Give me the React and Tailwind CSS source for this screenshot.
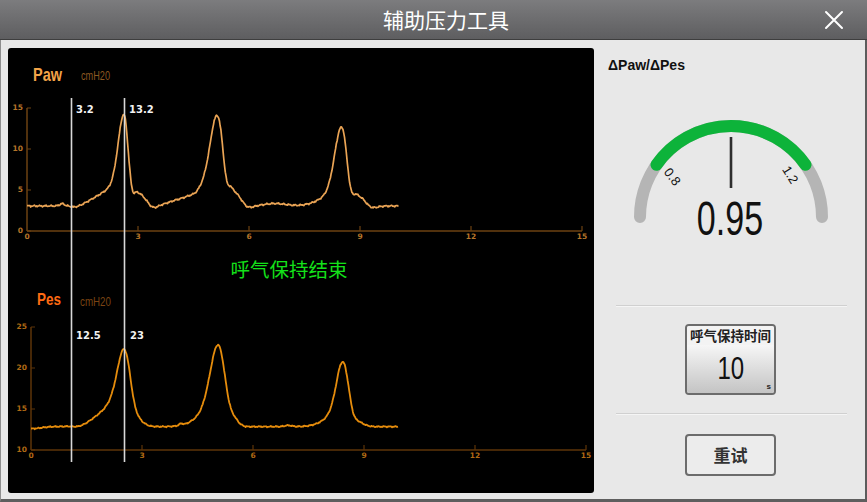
import React from "react";

// asymmetric gaussian bump
const g = (t, c, h, wl, wr) => {
  const w = t < c ? wl : wr;
  return h * Math.exp(-((t - c) ** 2) / (2 * w * w));
};

const noise = (t) =>
  0.06 * Math.sin(t * 41) + 0.04 * Math.sin(t * 97 + 1.3) + 0.03 * Math.sin(t * 173);

const pawValue = (t) =>
  3.05 + noise(t) +
  g(t, 0.95, 0.25, 0.06, 0.06) - g(t, 1.3, 0.3, 0.12, 0.2) +
  g(t, 2.55, 2.5, 0.55, 0.15) + g(t, 2.63, 8.9, 0.16, 0.11) + g(t, 2.98, 1.6, 0.08, 0.2) -
  g(t, 3.4, 0.35, 0.1, 0.12) + g(t, 4.0, 0.35, 0.25, 0.25) - g(t, 4.55, 0.2, 0.1, 0.1) +
  g(t, 5.0, 2.6, 0.5, 0.18) + g(t, 5.17, 9.2, 0.2, 0.14) + g(t, 5.52, 1.9, 0.07, 0.22) -
  g(t, 5.95, 0.35, 0.1, 0.15) + g(t, 6.7, 0.3, 0.3, 0.3) +
  g(t, 8.35, 1.5, 0.4, 0.18) + g(t, 8.52, 8.6, 0.19, 0.13) + g(t, 8.9, 1.3, 0.08, 0.2) -
  g(t, 9.3, 0.3, 0.1, 0.15);

const pesValue = (t) =>
  12.85 + noise(t) * 0.7 - g(t, 0, 0.25, 0.2, 0.25) - g(t, 1.3, 0.2, 0.15, 0.2) +
  g(t, 2.4, 3.0, 0.5, 0.2) + g(t, 2.55, 7.0, 0.2, 0.16) + g(t, 2.92, 0.6, 0.1, 0.15) +
  g(t, 4.05, 0.2, 0.05, 0.05) +
  g(t, 4.95, 2.2, 0.4, 0.2) + g(t, 5.08, 8.1, 0.22, 0.18) + g(t, 5.5, 0.7, 0.1, 0.12) +
  g(t, 6.95, 0.15, 0.1, 0.1) +
  g(t, 8.3, 1.5, 0.35, 0.15) + g(t, 8.45, 6.9, 0.18, 0.15) + g(t, 8.85, 0.5, 0.08, 0.15);

const trace = (fn, tEnd, x0, y0, yMin) => {
  const pts = [];
  for (let t = 0; t <= tEnd; t += 0.02) {
    const x = x0 + 37 * t;
    const y = y0 - (fn(t) - yMin) * 8.2;
    pts.push(`${x.toFixed(1)} ${y.toFixed(1)}`);
  }
  return "M" + pts.join(" L");
};

const Axis = ({ x0, y0, yLabels, axis, label }) => (
  <g>
    <line x1={x0} y1={y0 - 123} x2={x0} y2={y0} stroke={axis} strokeWidth="1.5" />
    <line x1={x0} y1={y0} x2={x0 + 555} y2={y0} stroke={axis} strokeWidth="1.5" />
    {yLabels.map((l, i) => (
      <g key={l}>
        <line x1={x0} y1={y0 - i * 41} x2={x0 + 4} y2={y0 - i * 41} stroke={axis} strokeWidth="1.2" />
        <text x={x0 - 4} y={y0 - i * 41 + 2} textAnchor="end" fontSize="7.5" fontWeight="bold" fill={label}>
          {l}
        </text>
      </g>
    ))}
    {[0, 3, 6, 9, 12, 15].map((v, i) => (
      <g key={v}>
        {i > 0 && (
          <line x1={x0 + i * 111} y1={y0 - 5} x2={x0 + i * 111} y2={y0} stroke={axis} strokeWidth="1.2" />
        )}
        <text x={x0 + i * 111} y={y0 + 8} textAnchor="middle" fontSize="7.5" fontWeight="bold" fill={label}>
          {v}
        </text>
      </g>
    ))}
  </g>
);

const WaveChart = () => (
  <svg width="586" height="445" viewBox="8 48 586 445" className="block">
    <g fontFamily="'DejaVu Sans', sans-serif">
      <text x="33" y="81" fontSize="19" fontWeight="bold" fill="#f3a448" textLength="29" lengthAdjust="spacingAndGlyphs" fontFamily="'Liberation Sans', sans-serif">
        Paw
      </text>
      <text x="81" y="80" fontSize="12" fill="#8c5820" textLength="29" lengthAdjust="spacingAndGlyphs" fontFamily="'Liberation Sans', sans-serif">
        cmH20
      </text>
      <Axis x0={27} y0={231} yLabels={[0, 5, 10, 15]} axis="#6d4212" label="#b5752a" />
      <path d={trace(pawValue, 10.05, 27, 231, 0)} fill="none" stroke="#eaa455" strokeWidth="1.7" strokeLinejoin="round" />

      <text x="37" y="305" fontSize="17" fontWeight="bold" fill="#ff6a12" textLength="24" lengthAdjust="spacingAndGlyphs" fontFamily="'Liberation Sans', sans-serif">
        Pes
      </text>
      <text x="80" y="306" fontSize="12" fill="#7a4312" textLength="31" lengthAdjust="spacingAndGlyphs" fontFamily="'Liberation Sans', sans-serif">
        cmH20
      </text>
      <Axis x0={31} y0={450} yLabels={[10, 15, 20, 25]} axis="#5e3408" label="#b06a14" />
      <path d={trace(pesValue, 9.92, 31, 450, 10)} fill="none" stroke="#e58c0c" strokeWidth="1.8" strokeLinejoin="round" />

      <line x1="71.5" y1="98" x2="71.5" y2="462" stroke="#d8d8d8" strokeWidth="1.6" />
      <line x1="124.5" y1="98" x2="124.5" y2="462" stroke="#d8d8d8" strokeWidth="1.6" />

      <g fontSize="10" fontWeight="bold" fill="#f2f2f2">
        <text x="76" y="113">3.2</text>
        <text x="129" y="113">13.2</text>
        <text x="76" y="339">12.5</text>
        <text x="130" y="339">23</text>
      </g>

      <text x="289" y="277" textAnchor="middle" fontSize="19.5" fill="#14e21a" fontFamily="'Noto Sans CJK SC', sans-serif">
        呼气保持结束
      </text>
    </g>
  </svg>
);

const Gauge = () => (
  <svg width="271" height="182" viewBox="594 73 271 182" className="block">
    <path d="M 640 217 A 91 91 0 0 1 822 217" fill="none" stroke="#b5b5b5" strokeWidth="12" strokeLinecap="round" />
    <path d="M 656.5 164.8 A 91 91 0 0 1 805.5 164.8" fill="none" stroke="#0db33a" strokeWidth="12" strokeLinecap="round" />
    <line x1="731" y1="137" x2="731" y2="188" stroke="#2e2e2e" strokeWidth="2.6" />
    <g fontFamily="'Liberation Sans', sans-serif" fill="#111">
      <text x="672" y="181" fontSize="13" textAnchor="middle" transform="rotate(52 672 177)">0.8</text>
      <text x="790" y="179" fontSize="13" textAnchor="middle" transform="rotate(58 790 175)">1.2</text>
      <g transform="translate(730 235) scale(0.71 1)">
        <text x="0" y="0" fontSize="48" textAnchor="middle">0.95</text>
      </g>
    </g>
  </svg>
);

const Divider = () => (
  <div className="ml-[22px] mr-[18px] h-[2px] border-t border-[#d0d0d0] border-b border-b-[#f5f5f5]" />
);

const App = () => {
  return (
    <div className="w-[867px] h-[502px] flex flex-col font-['Liberation_Sans','Noto_Sans_CJK_SC',sans-serif] overflow-hidden">
      {/* title bar */}
      <div className="h-[40px] shrink-0 flex items-center bg-linear-to-b from-[#7c7c7e] to-[#5e5e60] border-b border-[#3e3e3e]">
        <span className="ml-[383px] text-white text-[21px] leading-none font-['Noto_Sans_CJK_SC',sans-serif]">
          辅助压力工具
        </span>
        <svg width="20" height="20" viewBox="0 0 20 20" className="ml-auto mr-[23px]">
          <path d="M2 2 L18 18 M18 2 L2 18" stroke="#fff" strokeWidth="2" strokeLinecap="round" />
        </svg>
      </div>

      <div className="flex-1 flex bg-[#e8e8e8] border-l border-l-[#8e8e8e] border-r-2 border-r-[#5c5c5c] border-b-[3px] border-b-[#5e5e5e]">
        <div className="pl-[7px] pt-[8px]">
          <div className="w-[586px] h-[445px] bg-black rounded-[3px] overflow-hidden">
            <WaveChart />
          </div>
        </div>

        <div className="flex-1 flex flex-col">
          <div className="mt-[17px] ml-[14px] h-[16px] leading-[16px] text-[14px] font-bold text-[#111]">
            ΔPaw/ΔPes
          </div>
          <Gauge />
          <div className="mt-[50px]">
            <Divider />
          </div>
          <div className="mt-[17px] ml-[91px] w-[91px] h-[71px] rounded-[4px] border-2 border-[#6c6c6c] overflow-hidden flex flex-col">
            <div className="h-[19px] bg-[#f3f3f3] flex items-center justify-center text-[13.5px] leading-none font-bold text-[#222] font-['Noto_Sans_CJK_SC',sans-serif]">
              呼气保持时间
            </div>
            <div className="flex-1 relative bg-linear-to-b from-[#f6f6f6] to-[#c4c4c4] flex items-center justify-center">
              <span className="inline-block scale-x-[0.75] text-[32px] leading-none text-[#111] -mt-[2px]">10</span>
              <span className="absolute right-[3px] bottom-[2px] text-[8px] font-bold text-[#222] leading-none">s</span>
            </div>
          </div>
          <div className="mt-[18px]">
            <Divider />
          </div>
          <button className="mt-[19px] ml-[91px] w-[91px] h-[42px] rounded-[4px] border-2 border-[#6c6c6c] bg-[#ececec] text-[17px] font-bold text-[#333] font-['Noto_Sans_CJK_SC',sans-serif]">
            重试
          </button>
        </div>
      </div>
    </div>
  );
};

export default App;
